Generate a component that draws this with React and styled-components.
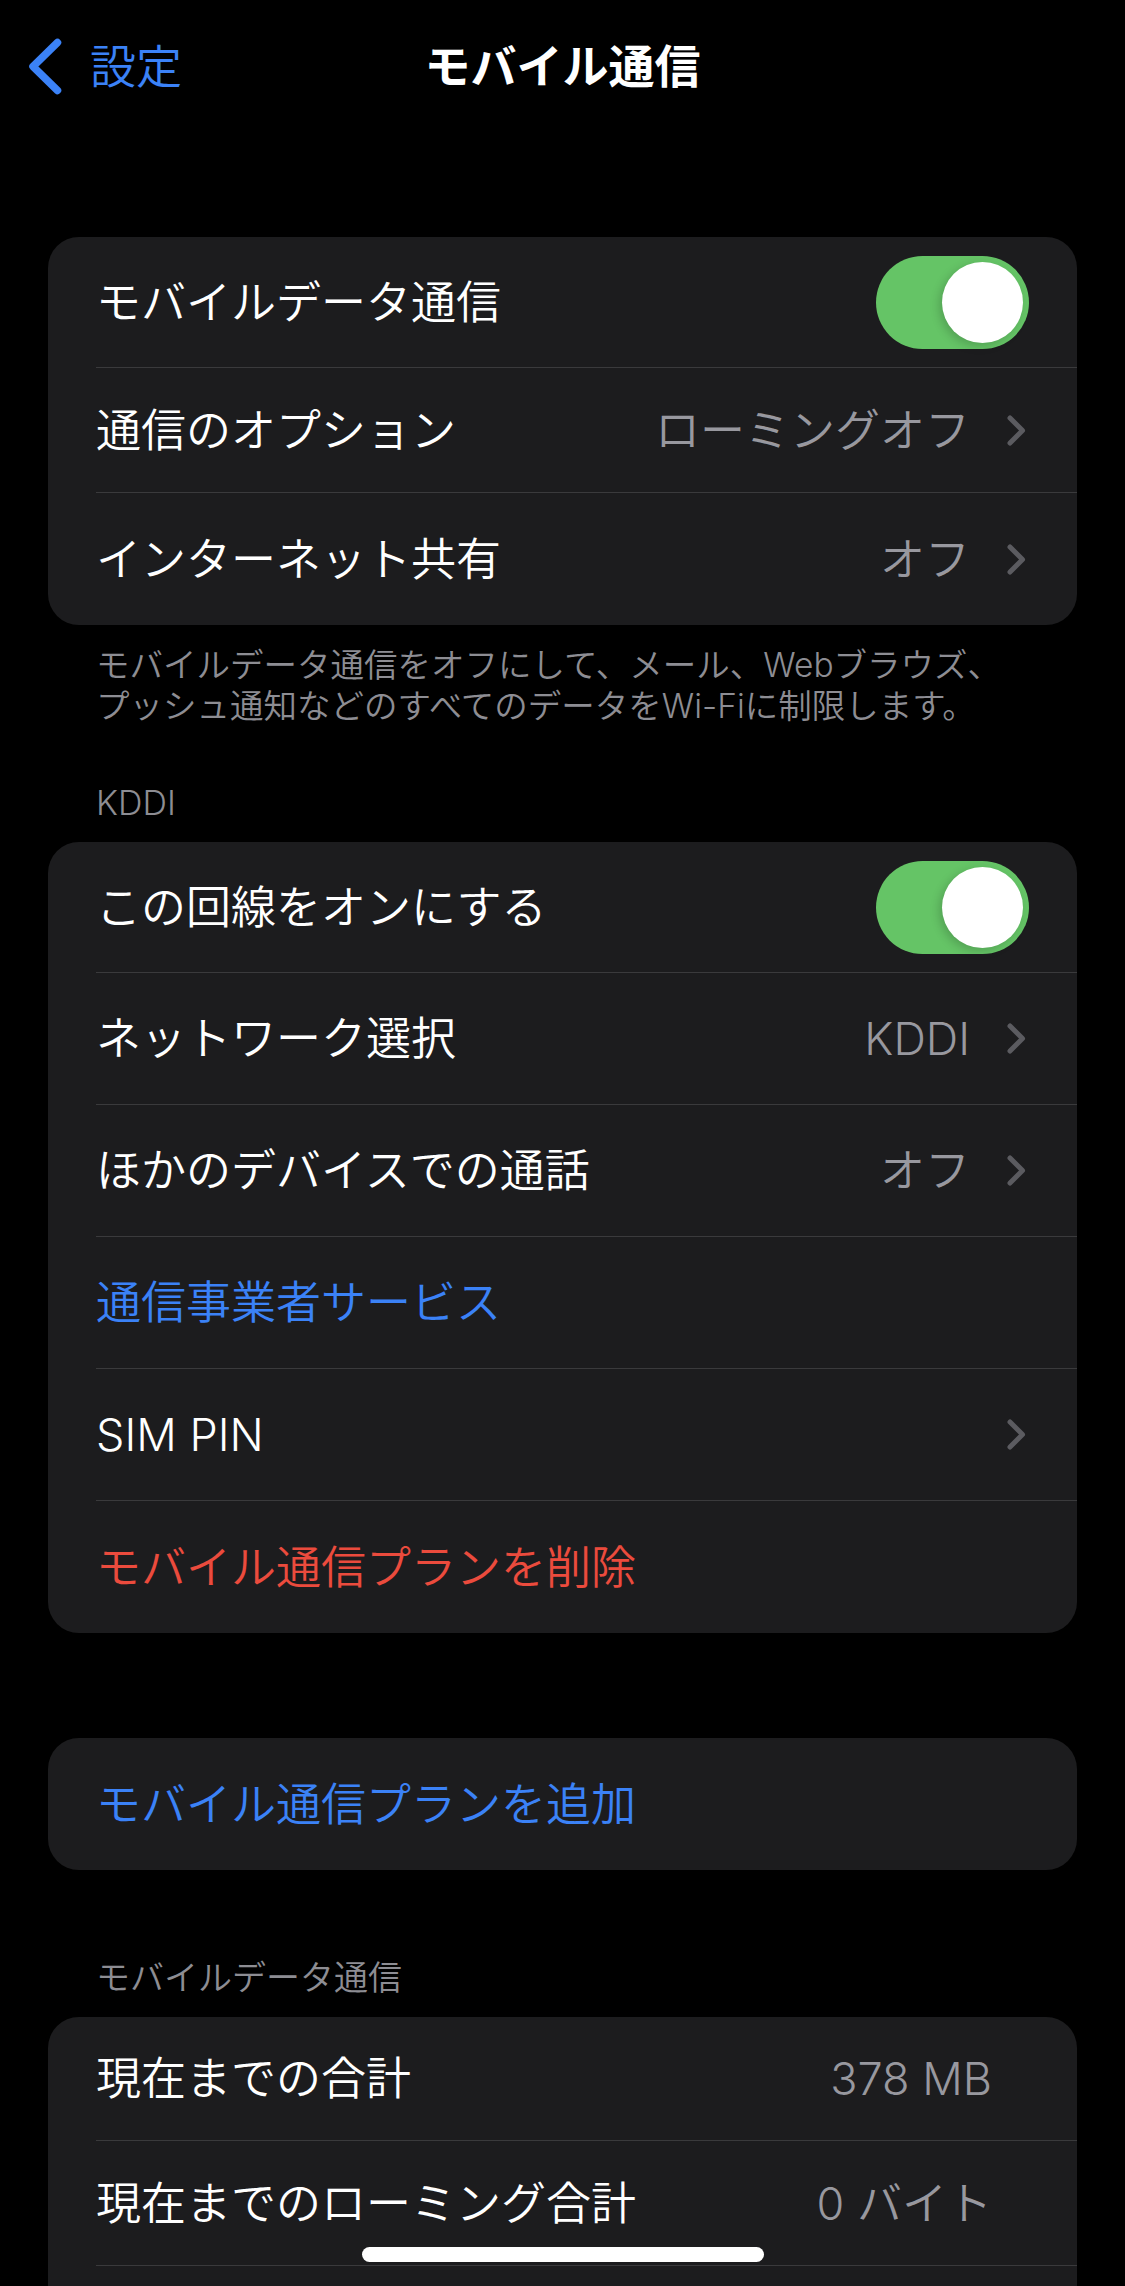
import React from "react";
import styled, { createGlobalStyle } from "styled-components";

const GlobalStyle = createGlobalStyle`
  html, body { margin: 0; padding: 0; background: #000; }
  body {
    font-family: Inter, "Noto Sans CJK JP", sans-serif;
    -webkit-font-smoothing: antialiased;
  }
  * { box-sizing: border-box; }
`;

const Screen = styled.div`
  position: relative;
  width: 1125px;
  height: 2286px;
  overflow: hidden;
  background: #000;
  color: #fff;
`;

const NavBar = styled.header`
  height: 132px;
  display: grid;
  grid-template-columns: 1fr auto 1fr;
  align-items: center;
  padding: 0 28px;
`;

const BackButton = styled.div`
  display: flex;
  align-items: center;
  gap: 28px;
  color: #3b82f7;
  font-size: 46px;
  font-weight: 350;
  line-height: 1;
`;

const Title = styled.h1`
  margin: 0;
  font-size: 46px;
  font-weight: 700;
  line-height: 1;
  color: #fff;
`;

const Content = styled.main`
  padding: 0 48px;
`;

const Card = styled.section`
  margin-top: ${(p) => p.$top}px;
  background: #1c1c1e;
  border-radius: 31px;
  overflow: hidden;
`;

const Row = styled.div`
  padding-left: 48px;
`;

const RowContent = styled.div`
  height: ${(p) => p.$h}px;
  display: flex;
  align-items: center;
  padding-right: ${(p) => p.$trail}px;
  border-bottom: ${(p) => (p.$last ? "none" : "1px solid #3a3a3c")};
`;

const toneColor = { normal: "#fff", link: "#3b82f7", danger: "#eb4b3d" };

const Label = styled.span`
  font-size: 45px;
  font-weight: 350;
  line-height: 1;
  color: ${(p) => toneColor[p.$tone || "normal"]};
  white-space: nowrap;
`;

const Value = styled.span`
  margin-left: auto;
  font-size: 45px;
  font-weight: 350;
  line-height: 1;
  color: #98989f;
  white-space: nowrap;
`;

const ChevronWrap = styled.span`
  display: flex;
  margin-left: ${(p) => (p.$alone ? "auto" : "36px")};
  margin-right: 2px;
`;

const Toggle = styled.div`
  margin-left: auto;
  width: 153px;
  height: 93px;
  border-radius: 47px;
  background: #65c466;
  display: flex;
  align-items: center;
  justify-content: flex-end;
  padding: 6px;
`;

const Thumb = styled.div`
  width: 81px;
  height: 81px;
  border-radius: 50%;
  background: #fff;
  box-shadow: -3px 3px 10px rgba(0, 0, 0, 0.18);
`;

const Footer = styled.p`
  margin: 0;
  padding: 20px 48px 0;
  font-size: 33.5px;
  font-weight: 350;
  line-height: 41px;
  color: #8d8d93;
  white-space: nowrap;
`;

const Header = styled.div`
  margin-top: ${(p) => p.$top}px;
  margin-bottom: 19px;
  padding: 0 48px;
  font-size: 34px;
  font-weight: 350;
  line-height: 41px;
  color: #8d8d93;
`;

const HomeIndicator = styled.div`
  position: absolute;
  left: 50%;
  bottom: 24px;
  width: 402px;
  height: 15px;
  margin-left: -201px;
  border-radius: 8px;
  background: #fff;
`;

const Chevron = ({ alone }) => (
  <ChevronWrap $alone={alone}>
    <svg width="21" height="33" viewBox="0 0 21 33">
      <path
        d="M4 4 L16.5 16.5 L4 29"
        fill="none"
        stroke="#5b5b60"
        strokeWidth="5"
        strokeLinecap="round"
        strokeLinejoin="round"
      />
    </svg>
  </ChevronWrap>
);

const BackChevron = () => (
  <svg width="34" height="57" viewBox="0 0 34 57">
    <path
      d="M29.5 4.5 L5 28.5 L29.5 52.5"
      fill="none"
      stroke="#3b82f7"
      strokeWidth="7.5"
      strokeLinecap="round"
      strokeLinejoin="round"
    />
  </svg>
);

const SettingRow = ({ h = 132, last, label, tone, value, chevron, toggle, trail = 48 }) => (
  <Row>
    <RowContent $h={h} $last={last} $trail={trail}>
      {label && <Label $tone={tone}>{label}</Label>}
      {value && <Value>{value}</Value>}
      {chevron && <Chevron alone={!value} />}
      {toggle && (
        <Toggle>
          <Thumb />
        </Toggle>
      )}
    </RowContent>
  </Row>
);

export default function App() {
  return (
    <>
      <GlobalStyle />
      <Screen>
        <NavBar>
          <BackButton>
            <BackChevron />
            <span>設定</span>
          </BackButton>
          <Title>モバイル通信</Title>
          <div />
        </NavBar>
        <Content>
          <Card $top={105}>
            <SettingRow h={131} label="モバイルデータ通信" toggle />
            <SettingRow h={125} label="通信のオプション" value="ローミングオフ" chevron />
            <SettingRow h={132} label="インターネット共有" value="オフ" chevron last />
          </Card>
          <Footer>
            モバイルデータ通信をオフにして、メール、Webブラウズ、
            <br />
            プッシュ通知などのすべてのデータをWi-Fiに制限します。
          </Footer>
          <Header $top={55}>KDDI</Header>
          <Card $top={0}>
            <SettingRow h={131} label="この回線をオンにする" toggle />
            <SettingRow label="ネットワーク選択" value="KDDI" chevron />
            <SettingRow label="ほかのデバイスでの通話" value="オフ" chevron />
            <SettingRow label="通信事業者サービス" tone="link" />
            <SettingRow label="SIM PIN" chevron />
            <SettingRow label="モバイル通信プランを削除" tone="danger" last />
          </Card>
          <Card $top={105}>
            <SettingRow label="モバイル通信プランを追加" tone="link" last />
          </Card>
          <Header $top={87}>モバイルデータ通信</Header>
          <Card $top={0}>
            <SettingRow h={124} label="現在までの合計" value="378 MB" trail={85} />
            <SettingRow h={125} label="現在までのローミング合計" value="0 バイト" trail={85} />
            <SettingRow trail={85} last />
          </Card>
        </Content>
        <HomeIndicator />
      </Screen>
    </>
  );
}
